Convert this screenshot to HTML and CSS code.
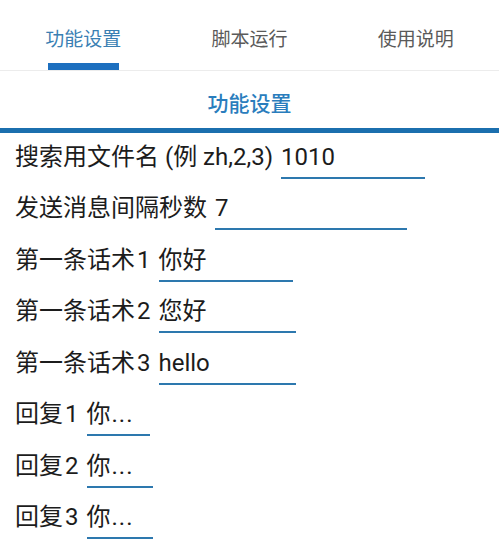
FILE: index.html
```html
<!DOCTYPE html>
<html lang="zh">
<head>
<meta charset="utf-8">
<title>功能设置</title>
<link rel="stylesheet" href="styles.css">
</head>
<body>
<nav class="tabs">
  <div class="tab active"><span class="tab-label">功能设置</span><span class="indicator"></span></div>
  <div class="tab"><span class="tab-label">脚本运行</span></div>
  <div class="tab"><span class="tab-label">使用说明</span></div>
</nav>
<header class="title">功能设置</header>
<main class="form">
  <div class="row"><span class="label">搜索用文件名 (例 zh,2,3)</span><span class="field w-name">1010</span></div>
  <div class="row"><span class="label">发送消息间隔秒数</span><span class="field w-interval">7</span></div>
  <div class="row"><span class="label">第一条话术<span class="num">1</span></span><span class="field w-talk1">你好</span></div>
  <div class="row"><span class="label">第一条话术<span class="num">2</span></span><span class="field w-talk">您好</span></div>
  <div class="row"><span class="label">第一条话术<span class="num">3</span></span><span class="field w-talk">hello</span></div>
  <div class="row"><span class="label">回复<span class="num">1</span></span><span class="field w-reply1 dots">你...</span></div>
  <div class="row"><span class="label">回复<span class="num">2</span></span><span class="field w-reply dots">你...</span></div>
  <div class="row"><span class="label">回复<span class="num">3</span></span><span class="field w-reply dots">你...</span></div>
</main>
</body>
</html>
```
FILE: styles.css
```css
html, body {
  margin: 0;
  padding: 0;
  background: #ffffff;
}
body {
  font-family: Roboto, "Noto Sans CJK SC", sans-serif;
  color: #1c1c1c;
  overflow: hidden;
}
.tabs {
  display: flex;
  height: 70px;
  border-bottom: 1px solid #ececec;
}
.tab {
  flex: 1;
  display: flex;
  flex-direction: column;
  align-items: center;
  padding-top: 28px;
}
.tab-label {
  font-size: 19px;
  line-height: 24px;
  color: #5a5a5a;
}
.tab.active .tab-label {
  color: #3a7fb3;
}
.indicator {
  margin-top: 11px;
  width: 71px;
  height: 7px;
  background: #1d6fbf;
}
.title {
  text-align: center;
  font-size: 21px;
  line-height: 26px;
  font-weight: 500;
  color: #2a7dbd;
  padding: 20px 0 11px;
  border-bottom: 5px solid #1b6fae;
}
.form {
  display: grid;
  row-gap: 14.43px;
  padding: 9px 0 0 15px;
}
.row {
  display: flex;
  align-items: flex-start;
  gap: 8px;
  font-size: 24px;
  line-height: 30px;
}
.label {
  white-space: nowrap;
}
.num {
  margin-left: 2px;
}
.field {
  padding-bottom: 5px;
  border-bottom: 2px solid #2d78ae;
  white-space: nowrap;
}
.dots {
  letter-spacing: 1px;
}
.w-name { width: 144px; }
.w-interval { width: 192px; }
.w-talk1 { width: 134px; }
.w-talk { width: 137px; }
.w-reply1 { width: 63px; }
.w-reply { width: 66px; }
```
